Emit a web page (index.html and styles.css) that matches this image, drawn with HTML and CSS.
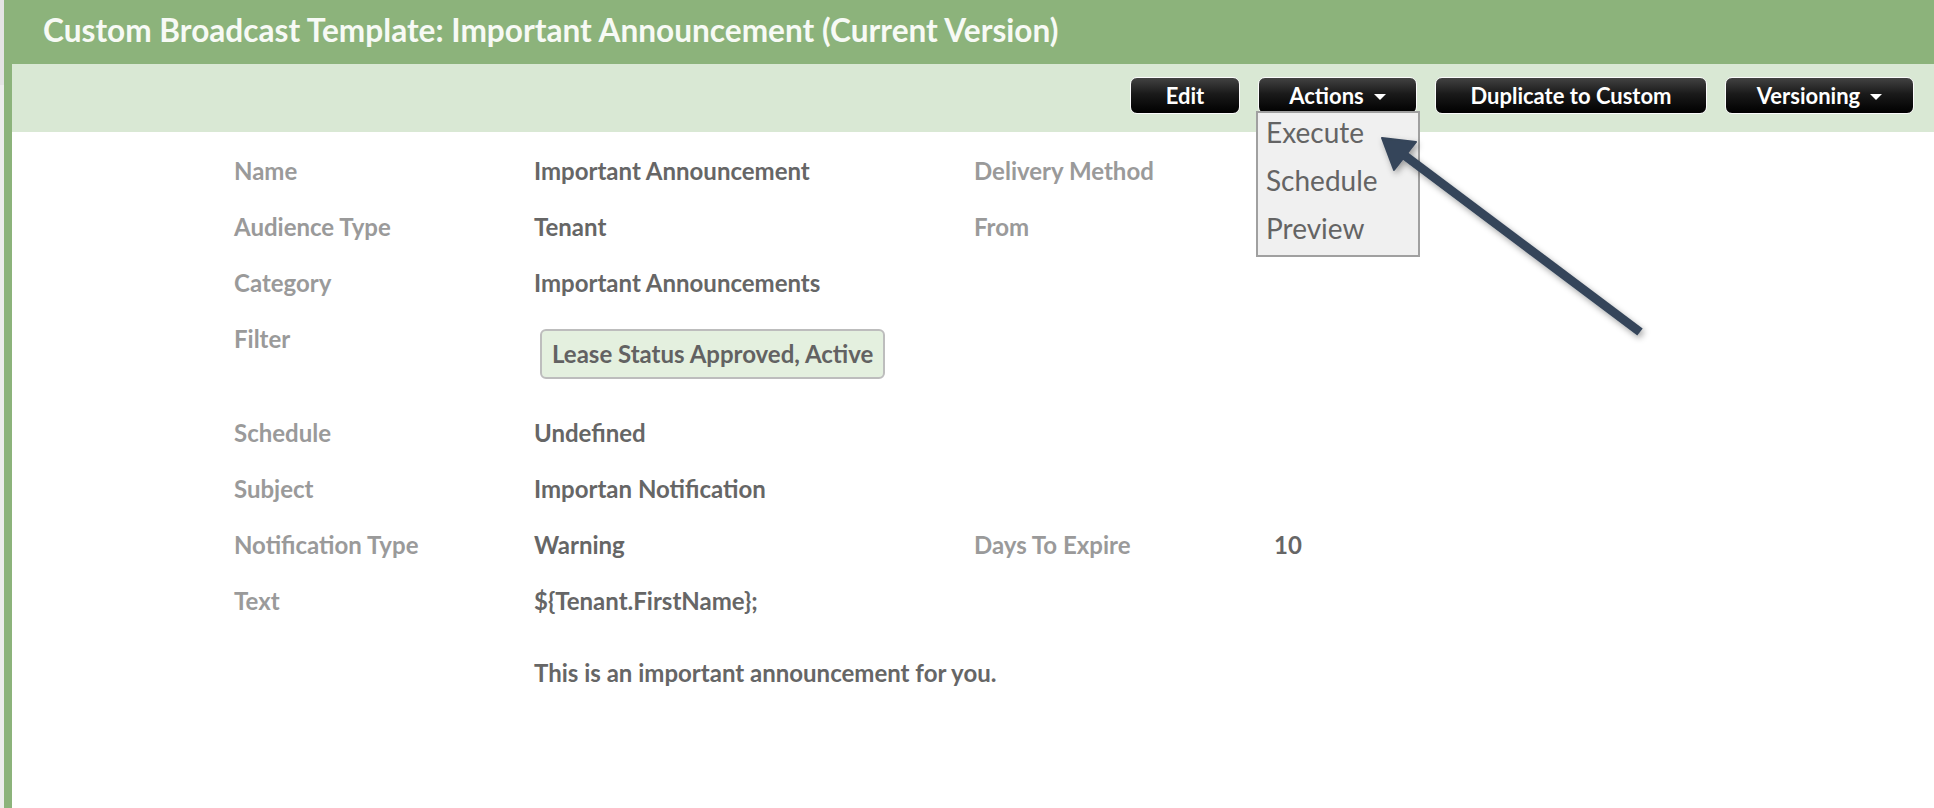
FILE: index.html
```html
<!DOCTYPE html>
<html>
<head>
<meta charset="utf-8">
<title>Custom Broadcast Template</title>
<link rel="stylesheet" href="styles.css">
</head>
<body>
<div class="page">
  <div class="gutter"></div>
  <div class="frame">
    <header class="header">
      <h1 class="title">Custom Broadcast Template: Important Announcement (Current Version)</h1>
    </header>
    <div class="toolbar">
      <button class="btn btn-edit">Edit</button>
      <div class="dropdown">
        <button class="btn btn-actions">Actions <span class="caret"></span></button>
        <ul class="menu">
          <li>Execute</li>
          <li>Schedule</li>
          <li>Preview</li>
        </ul>
      </div>
      <button class="btn btn-dup">Duplicate to Custom</button>
      <button class="btn btn-ver">Versioning <span class="caret"></span></button>
    </div>
    <div class="details">
      <div class="label">Name</div>
      <div class="value">Important Announcement</div>
      <div class="label">Delivery Method</div>
      <div class="value"></div>

      <div class="label">Audience Type</div>
      <div class="value">Tenant</div>
      <div class="label">From</div>
      <div class="value"></div>

      <div class="label">Category</div>
      <div class="value span3">Important Announcements</div>

      <div class="label">Filter</div>
      <div class="value span3"><span class="badge">Lease Status Approved, Active</span></div>

      <div class="label">Schedule</div>
      <div class="value span3">Undefined</div>

      <div class="label">Subject</div>
      <div class="value span3">Importan Notification</div>

      <div class="label">Notification Type</div>
      <div class="value">Warning</div>
      <div class="label">Days To Expire</div>
      <div class="value">10</div>

      <div class="label">Text</div>
      <div class="value span3">
        <div>${Tenant.FirstName};</div>
        <div class="para">This is an important announcement for you.</div>
      </div>
    </div>
  </div>
  <svg class="pointer" width="1934" height="808" viewBox="0 0 1934 808">
    <defs>
      <filter id="sh" x="-20%" y="-20%" width="140%" height="140%">
        <feDropShadow dx="2" dy="3" stdDeviation="3" flood-color="#000" flood-opacity="0.35"/>
      </filter>
    </defs>
    <g filter="url(#sh)" fill="#36455a" stroke="#36455a">
      <line x1="1640" y1="332" x2="1404" y2="155" stroke-width="9" stroke-linecap="butt"/>
      <polygon points="1382,138 1416,142 1394,170" stroke-width="2" stroke-linejoin="round"/>
    </g>
  </svg>
</div>
</body>
</html>
```
FILE: styles.css
```css
* { box-sizing: border-box; }
html, body { margin: 0; padding: 0; }
body {
  font-family: Lato, "Open Sans", "Liberation Sans", sans-serif;
  background: #fff;
  width: 1934px;
  height: 808px;
  overflow: hidden;
}
.page {
  position: relative;
  display: flex;
  height: 808px;
}
.gutter {
  width: 4px;
  background: linear-gradient(#e4e4e4 0, #e4e4e4 85px, #ededed 85px);
  flex: none;
}
.frame {
  flex: 1;
  border-left: 8px solid #8cb37b;
  display: flex;
  flex-direction: column;
}
.header {
  height: 64px;
  background: #8cb37b;
  display: flex;
  align-items: center;
  margin-left: -8px;
  padding-left: 39px;
}
.title {
  margin: 0;
  color: #f7faf5;
  font-size: 31.6px;
  font-weight: 700;
  line-height: 1;
  padding-bottom: 2px;
}
.toolbar {
  height: 68px;
  background: #d9e8d4;
  display: flex;
  justify-content: flex-end;
  align-items: flex-start;
  padding: 13px 20px 0 0;
  gap: 18px;
}
.btn {
  height: 37px;
  border: 1.5px solid #fbfbfb;
  border-radius: 7px;
  background: linear-gradient(#424242, #1a1a1a 45%, #000);
  color: #fff;
  font-family: Lato, "Open Sans", sans-serif;
  font-weight: 700;
  font-size: 22px;
  padding: 0;
  display: flex;
  align-items: center;
  justify-content: center;
  gap: 10px;
  cursor: pointer;
}
.btn-edit { width: 110px; }
.btn-actions { width: 159px; }
.btn-dup { width: 272px; }
.btn-ver { width: 189px; }
.caret {
  width: 0;
  height: 0;
  border-left: 6px solid transparent;
  border-right: 6px solid transparent;
  border-top: 6px solid #fff;
  margin-top: 2px;
}
.dropdown { position: relative; }
.menu {
  position: absolute;
  top: 34px;
  left: -2px;
  width: 164px;
  margin: 0;
  padding: 0 8px 3px;
  list-style: none;
  background: #f0f0f0;
  border: 2px solid #a0a0a0;
  z-index: 2;
}
.menu li {
  font-size: 28px;
  line-height: 48px;
  color: #646464;
}
.menu li:first-child { margin-top: -5px; }
.details {
  display: grid;
  grid-template-columns: 300px 440px 300px 1fr;
  row-gap: 28px;
  padding: 25px 0 0 222px;
  font-size: 24px;
  font-weight: 700;
  line-height: 28px;
}
.label { color: #9a9a9a; }
.value { color: #666; }
.span3 { grid-column: span 3; }
.badge {
  display: inline-block;
  margin: 4px 0 12px 6px;
  padding: 9px 10px;
  background: #e4f0df;
  border: 2px solid #bdbdbd;
  border-radius: 6px;
  color: #626262;
}
.para { margin-top: 44px; }
.pointer {
  position: absolute;
  left: 0;
  top: 0;
  pointer-events: none;
  z-index: 3;
}
```
